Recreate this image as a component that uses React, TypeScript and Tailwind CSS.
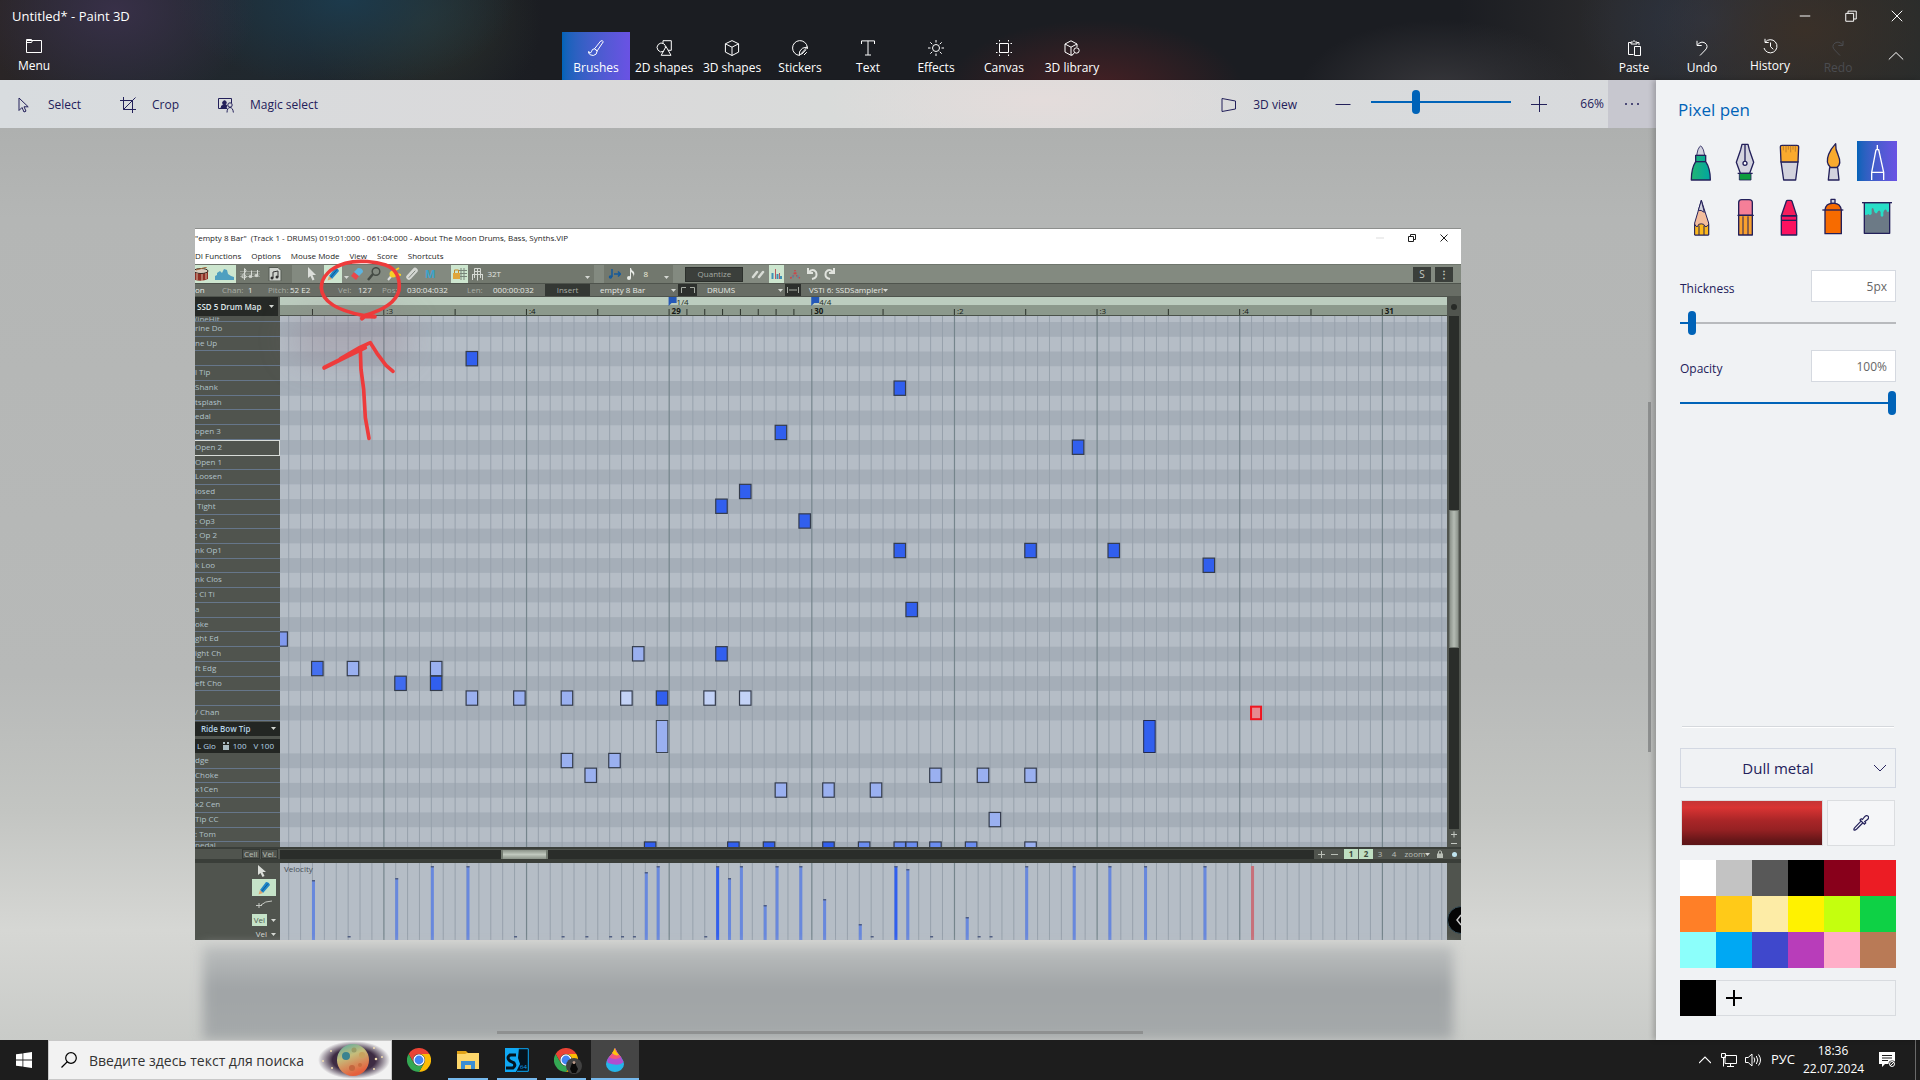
import type { ReactNode } from 'react'

interface IconProps {
  children: ReactNode;
  className?: string;
}

function Icon({ children, className = "w-4 h-4" }: IconProps) {
  return (
    <svg viewBox="0 0 16 16" fill="none" stroke="currentColor" strokeWidth="1" className={`shrink-0 ${className}`} aria-hidden="true">
      {children}
    </svg>
  );
}

const menuIcon = <Icon><path d="M.5 2.5h15v12H.5zM.5 2.5v-1h5l1 1-1 2h-5" /></Icon>
const brushIcon = <Icon><path d="M6.500 8.800 12.800.9q1.600-.7 2.500.8L9.200 10.900zM6.500 8.800q-2.700.2-2.800 2.400 0 2.200-3.200 1.500 1 2.800 4.800 2.800 3.700-.5 3.900-4.600zM.8 11v2" /></Icon>
const shapes2dIcon = <Icon><path d="M7 3V.7h8.300v9.600H12M7.500 11.400A4.400 4.400 0 1 1 7.900 3.800Q9.600 5 9.400 7.500M10 6.500 5.200 15.300h9.800z" /></Icon>
const shapes3dIcon = <Icon><path d="M8 .6 14.600 3.800v8.300L8 15.500 1.400 12.100V3.800zM1.400 3.800 8 7.200l6.600-3.400M8 7.200v8.300" /></Icon>
const stickersIcon = <Icon><path d="M7.500 15.400A7.400 7.400 0 1 1 15.300 7q-5.500.3-7.300 3.800-1 2-.5 4.600L15.300 7v2M9.500 14.500l4.500-4.800M12 15l2.800-2.800" /></Icon>
const textIcon = <Icon><path d="M1.500 4V.9h13V4M8 .9v14M5 15h6" /></Icon>
const effectsIcon = <Icon><circle cx="8" cy="8" r="3.500" /><path d="M8 0v2.500M8 13.500V16M0 8h2.500M13.500 8H16M2.300 2.300l1.900 1.900M11.800 11.800l1.900 1.900M13.700 2.300l-1.900 1.900M4.200 11.800l-1.900 1.900" /></Icon>
const canvasIcon = <Icon><path d="M3.500 3.500h9v9h-9zM3.500 0v1.500M12.500 0v1.500M3.500 14.500V16M12.500 14.500V16M0 3.500h1.500M0 12.500h1.500M14.500 3.500H16M14.500 12.500H16" /></Icon>
const libraryIcon = <Icon><path d="M8.500 14.600 7 15.300 1 12.100V4l6-3.200L13 4v3M1 4l6 3.200L13 4M7 7.200v8" /><circle cx="12.500" cy="10.500" r="2.700" /><path d="M10.600 12.500 7.800 15.700" /></Icon>
const pasteIcon = <Icon><path d="M5 2.500H2.500v12h5M11 2.500h2V5M5 4V2h1.500Q8-.8 9.500 2H11v2zM8.500 6.500h6v9h-6z" /></Icon>
const undoIcon = <Icon><path d="M3 .8v4.700h4.700M3.200 5.200Q7 .5 11 3q4 3.200.3 7L6 15.500" /></Icon>
const historyIcon = <Icon><path d="M3 .8v3.700h3.700M3.100 4.300A6.600 6.600 0 1 1 2 10M8.500 4.500v4.200l2.800 2.600" /></Icon>
const redoIcon = <Icon><path d="M13 .8v4.700H8.300M12.800 5.200Q9 .5 5 3q-4 3.200-.3 7l5.300 5.500" /></Icon>

const tools = [
  { label: "2D shapes", icon: shapes2dIcon },
  { label: "3D shapes", icon: shapes3dIcon },
  { label: "Stickers", icon: stickersIcon },
  { label: "Text", icon: textIcon },
  { label: "Effects", icon: effectsIcon },
  { label: "Canvas", icon: canvasIcon },
  { label: "3D library", icon: libraryIcon },
]

function RibbonButton({ label, icon, className = "pt-2" }: { label: string; icon: ReactNode; className?: string }) {
  return (
    <button className={`flex h-12 w-[68px] flex-col items-center gap-1 text-xs leading-4 whitespace-nowrap ${className}`}>
      {icon}
      {label}
    </button>
  );
}

function Header() {
  return (
    <header className="h-20 bg-[#1b1d22] bg-[radial-gradient(140px_100px_at_6%_10px,#383048,transparent),radial-gradient(170px_90px_at_18%_0,#1c3a4c,transparent),radial-gradient(120px_100px_at_22%_20px,#2c322c,transparent),radial-gradient(150px_70px_at_57%_90px,#472024,transparent),radial-gradient(140px_70px_at_75%_90px,#37373b,transparent),radial-gradient(150px_100px_at_94%_30px,#3a3028,transparent),radial-gradient(130px_90px_at_89%_20px,#2d3443,transparent),linear-gradient(to_right,#2a2526,#23272d_6%,#20282e_14%,#1b1d22_28%,#1b1d22_76%,#2a2a2c_84%,#282c2c)] text-white">
      <div className="flex h-8">
        <h1 className="flex-1 pl-3 pt-1 text-[13px] leading-6">Untitled* - Paint 3D</h1>
        <button aria-label="Minimize" className="grid w-[46px] place-items-center"><Icon className="w-3 h-3"><path d="M1 8h14" strokeWidth="1.300" /></Icon></button>
        <button aria-label="Restore" className="grid w-[46px] place-items-center"><Icon className="w-3 h-3"><path d="M1 4.500h10.500V15H1zM4 4.500V1.500h11V12h-3" strokeWidth="1.300" /></Icon></button>
        <button aria-label="Close" className="grid w-[46px] place-items-center"><Icon className="w-3 h-3"><path d="m1 1 14 14M15 1 1 15" strokeWidth="1.300" /></Icon></button>
      </div>
      <div className="flex">
        <RibbonButton label="Menu" icon={menuIcon} className="pt-1.5" />
        <nav className="flex flex-1 justify-center">
          <RibbonButton label="Brushes" icon={brushIcon} className="bg-linear-to-r from-[#0063b8] to-[#6a52e4] pt-2" />
          {tools.map((tool) => <RibbonButton key={tool.label} {...tool} />)}
        </nav>
        <RibbonButton label="Paste" icon={pasteIcon} />
        <RibbonButton label="Undo" icon={undoIcon} />
        <RibbonButton label="History" icon={historyIcon} className="pt-1.5" />
        <RibbonButton label="Redo" icon={redoIcon} className="pt-2 text-[#4b4c50]" />
        <button aria-label="Collapse ribbon" className="grid w-12 place-items-center"><Icon><path d="m.8 11.500 7.200-7 7.200 7" /></Icon></button>
      </div>
    </header>
  );
}

const sliderClass = "h-6 appearance-none bg-transparent bg-no-repeat bg-center bg-[length:100%_2px] [&::-webkit-slider-thumb]:h-6 [&::-webkit-slider-thumb]:w-2 [&::-webkit-slider-thumb]:appearance-none [&::-webkit-slider-thumb]:rounded-full [&::-webkit-slider-thumb]:bg-[#0063b8]"

function Toolbar() {
  return (
    <div className="flex h-12 items-center bg-[#d9dbdc] bg-[radial-gradient(220px_60px_at_63%_20px,#e4dcdb,transparent),linear-gradient(to_right,#d8dcdf,#dad9da_35%,#d9dbda_50%,#d8dadd)] text-xs text-[#23205a] shadow-[0_2px_3px_#00000022]">
      <button className="flex h-12 w-[102px] items-center gap-4 pl-4 pt-0.5">
        <Icon><path d="M3 1v12.500l3-3 2 4.500 2-.9-2-4.300h4.200z" /></Icon>
        Select
      </button>
      <button className="flex h-12 w-[98px] items-center gap-4 pl-[18px] pt-0.5">
        <Icon><path d="M3.500 0v12.500H16M0 3.500h12.500V16M3.500 12.500 15.500.5" /></Icon>
        Crop
      </button>
      <button className="flex h-12 items-center gap-4 pl-[18px] pt-0.5">
        <Icon><path d="M9 11.500H.500v-10h13V6" /><path d="M3 11q.3-3 2.500-3.300Q4 6 5 4.500q1.700-1.600 3 0 .8 1.500-.7 3.200L9 8.500 8 11z" fill="currentColor" /><circle cx="12" cy="8" r="2.200" /><path d="M9 15.500Q9.200 10.500 12 10.500t3.400 5" /></Icon>
        Magic select
      </button>
      <div className="ml-auto flex items-center">
        <button className="flex h-12 items-center gap-4 pt-0.5">
          <Icon><path d="M1 1.500 14.500 4v8L1 14.500z" /></Icon>
          3D view
        </button>
        <button aria-label="Zoom out" className="ml-[38px]"><Icon><path d="M.5 8.500h15" /></Icon></button>
        <input type="range" aria-label="Zoom" min="0" max="100" defaultValue="31" className={`${sliderClass} mx-5 mb-1 w-[140px] bg-[linear-gradient(#0063b8,#0063b8)]`} />
        <button aria-label="Zoom in"><Icon><path d="M0 8.500h16M8.500 0v16" /></Icon></button>
        <span className="w-[61px] pr-1 text-right">66%</span>
        <button aria-label="More options" className="grid h-12 w-12 place-items-center bg-[#c7c7cf]">
          <svg viewBox="0 0 16 4" className="h-1 w-4" fill="currentColor"><circle cx="2" cy="2" r="1" /><circle cx="8" cy="2" r="1" /><circle cx="14" cy="2" r="1" /></svg>
        </button>
      </div>
    </div>
  );
}

const Caret = () => <svg viewBox="0 0 5 3" className="h-[3px] w-[5px] shrink-0" fill="#d5d8d3" aria-hidden="true"><path d="M0 0h5L2.500 3z" /></svg>

const rowLabels = [
  "rine Do", "ne Up", "", "l Tip", "Shank", "tsplash", "edal", "open 3", "Open 2", "Open 1", "Loosen", "losed", " Tight",
  ": Op3", ": Op 2", "nk Op1", "k Loo", "nk Clos", ": Cl Ti", "a", "oke", "ght Ed", "ight Ch", "ft Edg", "eft Cho", "", "/ Chan",
]
const lowerLabels = ["dge", "Choke", "x1Cen", "x2 Cen", "Tip CC", ": Tom"]

const STEP = 11.887
const ORIGIN = 103.3
const ROW = 14.757
const colX = (col: number) => ORIGIN + col * STEP
const rowY = (row: number) => (row < 28 ? 6 + row * ROW : 437.400 + (row - 28) * ROW)

const DARK = "#315fee"
const MID = "#6b8df0"
const LIGHT = "#9ab0f0"
const PALE = "#c3d2f6"

// [column, row, fill]
const notes: [number, number, string][] = [
  [7, 2, DARK], [43, 4, DARK], [33, 7, DARK], [58, 8, DARK], [30, 11, DARK], [28, 12, DARK], [35, 13, DARK],
  [43, 15, DARK], [54, 15, DARK], [61, 15, DARK], [69, 16, DARK], [44, 19, DARK], [-9, 21, "#8099ee"],
  [21, 22, LIGHT], [28, 22, DARK], [-6, 23, "#4570f0"], [-3, 23, LIGHT], [4, 23, LIGHT], [1, 24, "#3f6bef"], [4, 24, DARK],
  [7, 25, LIGHT], [11, 25, LIGHT], [15, 25, LIGHT], [20, 25, PALE], [23, 25, DARK], [27, 25, PALE], [30, 25, PALE],
  [15, 28, LIGHT], [19, 28, LIGHT], [17, 29, LIGHT], [46, 29, LIGHT], [50, 29, LIGHT], [54, 29, LIGHT],
  [33, 30, LIGHT], [37, 30, LIGHT], [41, 30, LIGHT], [51, 32, LIGHT],
  [22, 34, DARK], [29, 34, DARK], [32, 34, DARK], [37, 34, DARK], [40, 34, MID], [43, 34, MID], [44, 34, MID],
  [46, 34, MID], [49, 34, MID], [54, 34, LIGHT],
]

// [column, height]
const velocities: [number, number][] = [
  [-6, 60], [1, 62], [4, 74], [7, 74], [22, 68], [23, 74], [28, 74], [29, 62], [30, 74], [32, 35], [33, 74], [35, 74],
  [37, 41], [40, 16], [43, 74], [44, 71], [49, 23], [54, 74], [58, 74], [61, 74], [64, 74], [69, 74],
  [-3, 3], [11, 3], [15, 3], [17, 3], [19, 3], [20, 3], [21, 3], [41, 3], [46, 3], [50, 3], [51, 3], [27, 3],
]

const gridLines = Array.from({ length: 99 }, (_, i) => i - 8)

function GridLines({ height }: { height: number }) {
  return (
    <>
      {gridLines.map((i) => (
        <rect key={i} x={colX(i)} width={i % 12 === 0 ? 1.2 : 1} y="0" height={height} fill={i % 12 === 0 ? "#75858c" : "#97a1ac"} />
      ))}
    </>
  );
}

function PianoRoll() {
  const stripes = Array.from({ length: 35 }, (_, i) => i).filter((i) => i % 2 === 0)
  return (
    <svg viewBox="0 0 1167 531" preserveAspectRatio="none" className="block h-full w-full bg-[#b5bdc6]" aria-label="Piano roll">
      {stripes.map((row) => <rect key={row} y={rowY(row)} width="1167" height={ROW} fill="#a5aeb8" />)}
      <GridLines height={531} />
      {notes.map(([col, row, fill]) => (
        <rect key={`${col}-${row}`} x={colX(col) - 0.4} y={rowY(row)} width="11.500" height="14.300" fill={fill} stroke="#343c4c" strokeWidth="1.200" />
      ))}
      <rect x={colX(23) - 0.4} y="404.500" width="11.500" height="32" fill={LIGHT} stroke="#3a4250" />
      <rect x={colX(64) - 0.4} y="404.500" width="11.500" height="32" fill={DARK} stroke="#222a50" />
      <rect x={colX(73)} y={rowY(26) + 1} width="10" height="12.500" fill="#e68a90" stroke="#f01520" strokeWidth="2" />
    </svg>
  );
}

function VelocityLane() {
  return (
    <svg viewBox="0 0 1167 77" preserveAspectRatio="none" className="block h-full w-full bg-[#b5bdc6]" aria-label="Velocity lane">
      <GridLines height={77} />
      {velocities.map(([col, height]) => (
        <g key={col}>
          {height > 3 && <rect x={colX(col)} y={77 - height} width="3" height={height} fill={col === 28 || col === 43 ? DARK : "#6888dd"} />}
          <rect x={colX(col)} y={height > 3 ? 77 - height : 73} width="3" height="1.500" fill="#4d5b80" />
        </g>
      ))}
      <rect x={colX(73)} y="3" width="3" height="74" fill="#c8707a" />
    </svg>
  );
}

const rulerTicks = [-6, 0, 6, 12, 18, 24, 25.5, 27, 28.5, 30, 31.5, 33, 34.5, 36, 42, 48, 54, 60, 66, 72, 78, 84]
const rulerMarks = [
  { col: 0, label: ":3" }, { col: 12, label: ":4" }, { col: 24, label: "29" }, { col: 36, label: "30" },
  { col: 48, label: ":2" }, { col: 60, label: ":3" }, { col: 72, label: ":4" }, { col: 84, label: "31" },
]

function Ruler() {
  return (
    <svg viewBox="0 0 1167 19" preserveAspectRatio="none" className="block h-[19px] min-w-0 flex-1 bg-[#8c998c]" aria-label="Timeline">
      <rect width="1167" height="8" fill="#bccdbf" />
      {rulerTicks.map((t) => <rect key={t} x={colX(t)} y="12" width="1" height="6" fill="#2b322b" />)}
      <rect y="18" width="1167" height="1" fill="#4a524a" />
      {rulerMarks.map((m) => (
        <text key={m.col} x={colX(m.col) + 3} y="17" fontSize="8" fill="#161a16" fontWeight={m.label[0] === ":" ? 400 : 700}>{m.label}</text>
      ))}
      {[{ col: 24, label: "1/4" }, { col: 36, label: "4/4" }].map((f) => (
        <g key={f.col}>
          <path d={`M${colX(f.col)} 0h8v6h-5l-3 3z`} fill="#2458b8" />
          <text x={colX(f.col) + 8} y="8" fontSize="8" fill="#222a22">{f.label}</text>
        </g>
      ))}
    </svg>
  );
}

function EditorToolbar() {
  return (
    <div className="flex h-[19px] items-center overflow-hidden border-t border-[#6f766d] bg-[#838a80]">
      <div className="flex h-full w-[97px] items-center bg-[#72786e]">
        <div className="flex h-full w-[41px] items-center gap-1.5 bg-[#cde6cf]">
          <svg viewBox="0 0 14 14" className="h-[14px] w-[14px]"><path d="M0 4h13v8q-6 3-13 1z" fill="#8e2f26" /><ellipse cx="6" cy="4" rx="7" ry="2.500" fill="#d8cbbd" stroke="#3a2c25" /><path d="M2 6v7M7 7v7M11 6v6" stroke="#d9b9a0" /><path d="m1 3 11-3" stroke="#a46a3d" /></svg>
          <svg viewBox="0 0 20 14" className="h-[14px] w-5"><path d="M0 13V9l2-1V6l3-2 2 2 2-4 3 1 1 4 3 2 3 1v3z" fill="#4f9fc0" /></svg>
        </div>
        <svg viewBox="0 0 20 14" className="ml-1 h-[14px] w-5" stroke="#d5d9d3" fill="none"><path d="M0 4.500h20M0 7h20M0 9.500h20" strokeWidth=".4" /><path d="M4.500 13V1.500q3 1 .5 4-4 3-3 5 3 1.500 4.500-.5-.5-2.500-3-1.500M11.500 9V3.500M17.500 8V3" /><ellipse cx="10.500" cy="9.500" rx="1.500" ry="1.100" fill="#d5d9d3" /><ellipse cx="16.500" cy="8.500" rx="1.500" ry="1.100" fill="#d5d9d3" /></svg>
        <svg viewBox="0 0 14 14" className="ml-2 h-[14px] w-[14px]"><path d="M1 .5h9l3 3V14H1z" fill="#cfd3ce" stroke="#555b53" /><path d="M5 11V5l5-1v6" stroke="#333" fill="none" /><circle cx="4" cy="11" r="1.500" fill="#333" /><circle cx="9" cy="10" r="1.500" fill="#333" /></svg>
      </div>
      <svg viewBox="0 0 8 14" className="ml-4 h-[14px] w-2"><path d="M0 0v11l2.500-2 2 4.500 2-1L4.500 8H8z" fill="#dcdfda" /></svg>
      <span className="ml-2 flex h-full w-[18px] items-center justify-center bg-[#cde6cf]"><Pencil /></span>
      <span className="ml-0.5 mt-1.5"><Caret /></span>
      <svg viewBox="0 0 12 12" className="ml-0.5 h-3 w-3"><path d="m0 8 3-4 5 4-3 4z" fill="#e8474b" /><path d="m3 4 4-4q5 0 5 4L8 8z" fill="#5cb4e0" /></svg>
      <svg viewBox="0 0 14 14" className="ml-1 h-[14px] w-[14px]" fill="none"><circle cx="9" cy="4.500" r="3.800" stroke="#454b44" strokeWidth="1.500" /><path d="m6 7-5 6" stroke="#454b44" strokeWidth="2.500" /></svg>
      <svg viewBox="0 0 14 14" className="ml-1.5 h-[14px] w-[14px]"><path d="m1 13 5-6" stroke="#ddd" strokeWidth="2" /><circle cx="6" cy="7" r="3.500" fill="#f3cf28" /><path d="m7 4 5-3M10 7l4 1" stroke="#f3cf28" strokeWidth="2" /></svg>
      <svg viewBox="0 0 14 14" className="ml-1 h-[14px] w-[14px]" fill="none"><path d="m4 10 6-6.500" stroke="#d5d8d3" strokeWidth="5.500" strokeLinecap="round" /><path d="m4 10.500 6-6.500" stroke="#7c837a" strokeLinecap="round" /></svg>
      <span className="ml-1.5 text-[11px] font-bold text-[#3aa3cc]">M</span>
      <div className="ml-4 flex h-full w-[143px] items-center bg-[#72786e] pr-1">
        <span className="flex h-full w-[17px] items-center justify-center bg-[#cde6cf]"><svg viewBox="0 0 14 12" className="h-3 w-[14px]" fill="none"><path d="M5 2.500h9M5 5.500h9M5 8.500h9M8 0v12M11 0v12" stroke="#79857b" /><path d="M0 5h7v6H0z" fill="#e0a63a" /><path d="M1.500 5V2h4v3" stroke="#c58a27" /></svg></span>
        <svg viewBox="0 0 11 13" className="ml-1 h-[13px] w-[11px]" fill="none" stroke="#d5d9d3"><path d="M2.500 3.500V.5h6v3M2.500 3.500h6M0 6.500h11M2.500 3v7M5.500 .5v12M8.500 3v7M.5 12V6.500M10.500 6.500V12" /></svg>
        <span className="ml-1 text-[8px] text-[#e4e6e2]">32T</span>
        <span className="ml-auto mt-1.5"><Caret /></span>
      </div>
      <div className="ml-2.5 flex h-full w-[69px] items-center bg-[#72786e] px-1">
        <svg viewBox="0 0 13 10" className="h-2.5 w-[13px]" fill="none" stroke="#155a9c" strokeWidth="1.500"><path d="M4 0v8M6 5h6M10 2.500 12.500 5 10 7.500" /><circle cx="2.500" cy="8" r="1" /></svg>
        <svg viewBox="0 0 8 12" className="ml-1.5 h-3 w-2" fill="#e8ebe6"><circle cx="2" cy="10" r="2" /><path d="M3 0h1q0 2 3 4 1 2-.5 5Q7 6 4 4v6H3z" /></svg>
        <span className="ml-2 text-[8px] text-[#f0efdc]">8</span>
        <span className="ml-auto mt-1.5"><Caret /></span>
      </div>
      <button className="ml-3 h-[15px] w-[58px] border border-[#2c302c] bg-[#3b3f3b] text-[8px] leading-3 text-[#a5aaa3]">Quantize</button>
      <svg viewBox="0 0 14 9" className="ml-2 h-[9px] w-[14px]" stroke="#d8dcd5" strokeWidth="2.500" strokeLinecap="round"><path d="m2 7 4-5M8 7l4-5" /></svg>
      <span className="ml-1 flex h-full w-[15px] items-end justify-center bg-[#cde6cf] pb-1"><svg viewBox="0 0 12 10" className="h-2.5 w-3"><path d="M1.500 10V4M6.500 10V5M10 10V7" stroke="#3e8fb5" strokeWidth="2" /><path d="M4.500 10V0M8.500 10V4" stroke="#b8585f" fill="none" /></svg></span>
      <svg viewBox="0 0 11 10" className="ml-1.5 h-2.5 w-[11px]" fill="none"><path d="M0 9q4 0 5-8 1 8 6 8" stroke="#c9484b" strokeWidth="1.500" strokeDasharray="2 1" /><path d="M3 9V6M8 9V6" stroke="#3e8fb5" /></svg>
      <svg viewBox="0 0 11 12" className="ml-1.5 h-3 w-[11px]" fill="none" stroke="#e0e3dd" strokeWidth="2"><path d="M1 0v5h5M2 4q4-4 7 0 2 6-4 7" /></svg>
      <svg viewBox="0 0 11 12" className="ml-1.5 h-3 w-[11px]" fill="none" stroke="#e0e3dd" strokeWidth="2"><path d="M10 0v5H5M9 4Q5 0 2 4q-2 6 4 7" /></svg>
      <button className="ml-auto h-[15px] w-[18px] bg-[#3b3f3b] text-[10px] leading-3 text-[#c5c9c3]">S</button>
      <button className="ml-1 mr-2 h-[15px] w-[18px] bg-[#3b3f3b] text-[10px] leading-3 font-bold text-[#c5c9c3]">⋮</button>
    </div>
  );
}

function Pencil() {
  return (
    <svg viewBox="0 0 14 14" className="h-[14px] w-[14px]"><path d="M3 9 9 1q3 0 4 3L6 12z" fill="#1f86c8" /><path d="m4.500 10.500 6.500-8" stroke="#0c5a97" /><path d="m3 9 3 3-4.500 1.500z" fill="#e0a46c" /></svg>
  );
}

function InfoBar() {
  return (
    <div className="flex h-[14px] items-center overflow-hidden border-y border-[#4f544d] bg-[#686d65] text-[8px] leading-3 font-medium whitespace-nowrap text-[#e6e9e3]">
      <span className="w-[27px]">on</span>
      <span className="w-[26px] text-[#a9aea5]">Chan:</span>
      <span className="w-5">1</span>
      <span className="w-[22px] text-[#a9aea5]">Pitch:</span>
      <span className="w-12">52 E2</span>
      <span className="w-5 text-[#a9aea5]">Vel:</span>
      <span className="w-6">127</span>
      <span className="w-[25px] text-[#a9aea5]">Pos:</span>
      <span className="w-[60px]">030:04:032</span>
      <span className="w-[26px] text-[#a9aea5]">Len:</span>
      <span className="w-[52px]">000:00:032</span>
      <span className="h-full w-[45px] bg-[#343834] text-center text-[#a9aea5]">Insert</span>
      <span className="ml-2.5 w-[71px]">empty 8 Bar</span>
      <Caret />
      <span className="ml-0.5 flex h-full w-[19px] items-center justify-center bg-[#2d302d]"><svg viewBox="0 0 14 6" className="h-1.5 w-[14px]" fill="none" stroke="#a7aca4"><path d="M.5 6V.5H5M9 .5h4.500V6" /></svg></span>
      <span className="ml-2.5 w-[71px]">DRUMS</span>
      <Caret />
      <span className="ml-0.5 flex h-full w-4 items-center justify-center bg-[#2d302d]"><svg viewBox="0 0 12 6" className="h-1.5 w-3" fill="none" stroke="#a7aca4"><path d="M.5 0v6M11.500 0v6M2 3h8" /></svg></span>
      <span className="ml-2">VSTi 6: SSDSampler!</span>
      <Caret />
    </div>
  );
}

function RowLabel({ text, selected = false }: { text: string; selected?: boolean }) {
  return (
    <li className={`min-h-0 flex-1 overflow-hidden border-b text-[8px] leading-3 font-medium whitespace-pre text-[#b0c2c9] ${selected ? "border border-l-0 border-[#d8dcd8]" : "border-[#66768a]"}`}>
      {text}
    </li>
  );
}

function DrumList() {
  return (
    <ul className="flex h-[531px] w-[85px] shrink-0 flex-col bg-[#50544e]">
      <li className="h-1.5 shrink-0 overflow-hidden border-b border-[#66768a] text-[8px] leading-[6px] text-[#a9bbc2]">(ineHit</li>
      {rowLabels.map((text, i) => <RowLabel key={i} text={text} selected={i === 8} />)}
      <li className="flex h-[33px] shrink-0 flex-col justify-between py-px text-[8px] leading-[14px] text-[#b5d3e6]">
        <div className="flex h-[14px] items-center justify-between bg-[#232623] pl-1.5 pr-1 font-semibold">Ride Bow Tip <Caret /></div>
        <div className="flex h-[14px] items-center justify-between bg-[#232623] pl-0.5 pr-1.5">
          <span>L Glo</span>
          <span className="flex items-center gap-1"><svg viewBox="0 0 6 8" className="h-2 w-1.5" fill="#a9bbc2"><path d="M0 0h2v2H0zM4 0h2v2H4zM0 3h6v5H0z" /></svg>100</span>
          <span>V 100</span>
        </div>
      </li>
      {lowerLabels.map((text) => <RowLabel key={text} text={text} />)}
      <li className="h-[5px] shrink-0 overflow-hidden text-[8px] leading-[6px] text-[#a9bbc2]">pedal</li>
    </ul>
  );
}

// Hand-drawn circle and arrow over the pencil tool
function Scribble() {
  return (
    <svg viewBox="15 9 660 660" className="pointer-events-none absolute left-0 top-0 h-[220px] w-[220px]" fill="none" stroke="#ee3b3b" strokeWidth="11" strokeLinecap="round" strokeLinejoin="round" aria-hidden="true">
      <path d="M466 112c-45 14-72 40-72 74 2 38 45 67 128 83 42-12 95-35 105-76 4-38-10-66-40-76-28-9-80-17-121-5" />
      <path d="m516 277 8-7 30 2" strokeWidth="13" />
      <path d="m403 425 72-36 50-24" strokeWidth="13" />
      <path d="m452 398 58-34 31-14 20 32 27 36 21 18M511 370l2 60 8 60 5 85 11 62" />
    </svg>
  );
}

function EditorWindow() {
  return (
    <section className="relative w-full overflow-hidden border-t border-[#8d8f8d] text-[#1d1d1d]">
      <div className="flex h-[18px] items-center bg-white text-[8px] leading-[18px] whitespace-pre">
        <h2 className="flex-1">"empty 8 Bar"  (Track 1 - DRUMS) 019:01:000 - 061:04:000 - About The Moon Drums, Bass, Synths.VIP</h2>
        <div className="flex items-center gap-6 pr-[13px]">
          <Icon className="h-2 w-2 text-[#ddd]"><path d="M0 8h16" strokeWidth="2" /></Icon>
          <Icon className="h-2 w-2"><path d="M1 5h10v10H1zM5 5V1h10v10h-4" strokeWidth="2" /></Icon>
          <Icon className="h-2 w-2"><path d="m1 1 14 14M15 1 1 15" strokeWidth="2" /></Icon>
        </div>
      </div>
      <div className="flex h-[17px] items-center gap-2.5 bg-white pt-px text-[8px] leading-4 whitespace-nowrap">
        <span>DI Functions</span><span>Options</span><span>Mouse Mode</span><span>View</span><span>Score</span><span>Shortcuts</span>
      </div>
      <EditorToolbar />
      <InfoBar />
      <div className="flex h-[19px]">
        <div className="flex w-[85px] shrink-0 items-center justify-between border-r-2 border-[#50544e] bg-[#262926] pl-0.5 pr-1 text-[8px] font-semibold text-[#dfe6e6]">SSD 5 Drum Map <Caret /></div>
        <Ruler />
        <div className="grid w-[14px] shrink-0 place-items-center bg-[#50544e]"><span className="h-1.5 w-1.5 rounded-full bg-[#272a27]" /></div>
      </div>
      <div className="flex h-[531px]">
        <DrumList />
        <div className="min-w-0 flex-1"><PianoRoll /></div>
        <div className="flex w-[14px] shrink-0 flex-col items-center bg-[#50544e] text-[#c5c9c3]">
          <div className="flex w-2.5 flex-1 flex-col bg-[#2a2d2a] pt-[194px]"><div className="h-[138px] border border-[#70766f] bg-linear-to-r from-[#8d948c] via-[#b5bcb4] to-[#8d948c]" /></div>
          <svg viewBox="0 0 8 18" className="h-[18px] w-2" stroke="currentColor"><path d="M1 5.500h6M4 2.500v6M1 14.500h6" /></svg>
        </div>
      </div>
      <div className="flex h-4 items-center border-t-2 border-b-4 border-[#3a3e39] bg-[#50544e] text-[8px] leading-[10px] text-[#b9beb6]">
        <div className="flex w-[85px] shrink-0 justify-end gap-px pr-0.5"><span className="border border-[#343834] px-px leading-2">Cell</span><span className="border border-[#343834] px-px leading-2">Vel.</span></div>
        <div className="flex h-[9px] min-w-0 flex-1 bg-[#2a2d2a] pl-[221px]"><div className="w-[47px] border-x-2 border-[#747c72] bg-linear-to-b from-[#8b9389] via-[#c0c8be] to-[#8b9389]" /></div>
        <svg viewBox="0 0 26 8" className="mx-0.5 h-2 w-[26px]" stroke="currentColor"><path d="M2 4.500h7M5.500 1v7M15 4.500h7" /></svg>
        <span className="w-[14px] bg-[#bfdfc2] text-center font-bold text-[#3b4a3c]">1</span>
        <span className="ml-px w-[14px] bg-[#bfdfc2] text-center font-bold text-[#3b4a3c]">2</span>
        <span className="w-[14px] text-center">3</span>
        <span className="w-[14px] text-center">4</span>
        <span className="flex w-[33px] items-center justify-center">zoom<Caret /></span>
        <svg viewBox="0 0 8 8" className="ml-0.5 h-2 w-2" fill="#b9beb6"><path d="M1 3.500h6V8H1z" /><path d="M2.500 4V1.500q1.500-1.500 3 0V4" fill="none" stroke="#b9beb6" /></svg>
        <span className="ml-2 mr-1 h-[5px] w-[5px] rounded-full bg-[#c0e4f0]" />
      </div>
      <div className="flex h-[77px]">
        <div className="flex w-[85px] shrink-0 flex-col items-end bg-[#50544e] pr-1 text-[8px] leading-3 text-[#d5d8d3]">
          <svg viewBox="0 0 8 12" className="mr-2.5 mt-0.5 h-3 w-2"><path d="M0 0v10l2.500-2 2 4 2-1-2-4H8z" fill="#dcdfda" /></svg>
          <span className="mt-0.5 flex h-[17px] w-6 items-center justify-center bg-[#c5e3c8]"><Pencil /></span>
          <svg viewBox="0 0 16 8" className="mr-1 mt-1 h-2 w-4" fill="none" stroke="#c5c9c3"><path d="M0 5.500h6M3 3v5M5 5q4-4 11-4" /></svg>
          <span className="mt-1.5 flex items-center gap-1"><b className="bg-[#c5e3c8] px-0.5 font-normal text-[#4d584e]">Vel</b><Caret /></span>
          <span className="mt-0.5 flex items-center gap-1">Vel <Caret /></span>
        </div>
        <div className="relative min-w-0 flex-1">
          <VelocityLane />
          <span className="absolute left-1 top-0 text-[8px] leading-3 text-[#474e55]">Velocity</span>
        </div>
        <div className="relative w-[14px] shrink-0 bg-[#50544e]">
          <svg viewBox="0 0 14 30" className="absolute left-0 top-[42px] h-[30px] w-[14px]"><circle cx="14" cy="15" r="13.500" fill="#050505" stroke="#39515c" /><path d="m14 10-4 5 4 5" fill="none" stroke="#c8c8c8" strokeWidth="1.500" /></svg>
        </div>
      </div>
      <div className="pointer-events-none absolute left-[95px] top-[84px] h-[50px] w-[120px] rounded-full bg-[#8b708044] blur-lg" />
      <Scribble />
    </section>
  );
}

const ink = "#23205a"

const brushes = [
  {
    name: "Marker",
    art: <><path d="M47 43q3-20 9-26 3-4 6 0 6 6 9 26z" fill="#d3d3de" strokeWidth="2.500" /><path d="M44 43h30v19q14 20 14 55H31q0-35 13-55z" fill="url(#teal)" /><path d="M44 62h30" /></>,
  },
  {
    name: "Calligraphy pen",
    art: <><path d="M43 97h35v20H43z" fill="#0c9c3c" strokeWidth="2.500" /><path d="M51 10h18l4 16 13 38-12 33H46L34 64l13-38z" fill="#d3d3de" /><path d="M60 10v50M38 97h45" /><circle cx="60" cy="67" r="6" fill="#fff" /></>,
  },
  {
    name: "Oil brush",
    art: <><path d="m36 62 8 55h36l7-55z" fill="#d3d3de" /><path d="M34 17q0-4 5-4h45q5 0 5 4l-2 46H36z" fill="#f9aa2e" /><path d="M43 14v14M51 14v20M58 14v12M65 14v20M72 14v12M79 14v18" strokeWidth="2" stroke="#a5692b" /></>,
  },
  {
    name: "Watercolor",
    art: <><path d="m50 80-4 37h32l-4-37z" fill="#d3d3de" /><path d="M68 8q-1 18 7 33 12 27-3 38H52Q37 66 47 40 53 24 68 8z" fill="#f9aa2e" /></>,
  },
  {
    name: "Pixel pen",
    selected: true,
    art: <g stroke="#fff"><path d="M61 12v14M57 26h8l15 68v23M57 26 44 94v23M44 94h36" fill="none" /></g>,
  },
  {
    name: "Pencil",
    art: <><path d="m61 10-20 68v36h42V78z" fill="#f3bd9c" strokeWidth="3" /><path d="m61 10-9 30q8-2 18 6z" fill="#d3d3de" strokeWidth="3" /><path d="M41 114V82q8 14 12 0 8-3 15 0 6 14 15 0v32z" fill="#fcb81c" strokeWidth="3" /><path d="M54 86v28M69 86v28" strokeWidth="3" /></>,
  },
  {
    name: "Eraser",
    art: <><path d="M41 55V17q0-9 9-9h22q10 0 10 9v38z" fill="#f57f98" /><path d="M41 55h41v59H41z" fill="#f9a02e" /><path d="M37 55h50M54 58v56M69 58v56" strokeWidth="3" /></>,
  },
  {
    name: "Crayon",
    art: <><path d="m37 56 15-43q1-3 4-3h9q3 0 4 3l14 43z" fill="#f51d5c" /><path d="M37 57h46v57H37z" fill="#fb1260" /><path d="M37 70h46" /></>,
  },
  {
    name: "Spray can",
    art: <><path d="M54 7h12v12H54z" fill="#d3d3de" /><path d="M36 39q2-20 22-20h6q18 0 21 20v71H36z" fill="#f76b00" /><path d="M28 39h63" /></>,
  },
  {
    name: "Fill",
    art: <><path d="M22 17h76v92H22z" fill="#6c7a86" /><path d="M24 19h72v24q-3 4-7 0v-3q-4-5-7 0l-3 6v10q-4 6-8 0V46q-3-9-8-3-3 8-7 6-5-3-6-12-3-8-6-1v15q-7 6-9 0l-4 2-7 1z" fill="#27dfc8" stroke="none" /><path d="M15 17h90" /></>,
  },
]

const swatches = [
  "bg-[#ffffff]", "bg-[#c3c3c3]", "bg-[#585858]", "bg-[#000000]", "bg-[#88001b]", "bg-[#ec1c24]",
  "bg-[#ff7f27]", "bg-[#ffca18]", "bg-[#fdeca6]", "bg-[#fff200]", "bg-[#c4ff0e]", "bg-[#0ed145]",
  "bg-[#8cfffb]", "bg-[#00a8f3]", "bg-[#3f48cc]", "bg-[#b83dba]", "bg-[#ffaec8]", "bg-[#b97a56]",
]

function SidePanel() {
  return (
    <aside className="z-10 flex w-[264px] shrink-0 flex-col bg-[#f0f2f4] px-6 pb-6 text-[#23205a] shadow-[-3px_0_5px_#00000033]">
      <h2 className="-ml-0.5 pt-4 text-[17px] leading-7 text-[#0063b8]">Pixel pen</h2>
      <div className="mt-[17px] grid grid-cols-5 gap-x-1 gap-y-4">
        {brushes.map((brush) => (
          <button key={brush.name} aria-label={brush.name} className={`ml-px h-10 w-10 ${brush.selected ? "bg-linear-to-r from-[#0063b8] to-[#6a52e4]" : ""}`}>
            <svg viewBox="0 0 120 120" className="h-10 w-10" fill="none" stroke={ink} strokeWidth="4" strokeLinejoin="round">
              <defs><linearGradient id="teal"><stop stopColor="#22b573" /><stop offset="1" stopColor="#00a6a0" /></linearGradient></defs>
              {brush.art}
            </svg>
          </button>
        ))}
      </div>
      <div className="mt-[33px] flex items-center justify-between text-xs">
        <label htmlFor="thickness" className="pt-1.5">Thickness</label>
        <input id="thickness" defaultValue="5px" className="h-8 w-[85px] border border-[#d5d9e0] bg-white px-2 text-right text-[#666]" />
      </div>
      <input type="range" aria-label="Thickness slider" min="1" max="100" defaultValue="5" className={`${sliderClass} mt-[9px] w-full bg-[linear-gradient(to_right,#0063b8_5%,#b8babd_5%)]`} />
      <div className="mt-[15px] flex items-center justify-between text-xs">
        <label htmlFor="opacity" className="pt-1.5">Opacity</label>
        <input id="opacity" defaultValue="100%" className="h-8 w-[85px] border border-[#d5d9e0] bg-white px-2 text-right text-[#666]" />
      </div>
      <input type="range" aria-label="Opacity slider" min="0" max="100" defaultValue="100" className={`${sliderClass} mt-[9px] w-full bg-[linear-gradient(#0063b8,#0063b8)]`} />
      <div className="mx-0.5 mt-auto border-b border-white"><div className="border-b border-[#d5d8dc]" /></div>
      <div className="relative mt-5">
        <select aria-label="Material" className="h-10 w-full appearance-none border border-[#d3d8e2] bg-transparent pr-5 text-[15px] [text-align-last:center]">
          <option>Dull metal</option>
        </select>
        <Icon className="pointer-events-none absolute right-2.5 top-3.5 h-3 w-3"><path d="m0 4 8 8 8-8" strokeWidth="1.300" /></Icon>
      </div>
      <div className="mx-px mt-3 flex h-[46px] gap-1">
        <button aria-label="Current color" className="h-full flex-1 border border-[#dcdee0] bg-[linear-gradient(#c43636,#d93433_15%,#a82527_45%,#962123_65%,#651618_90%,#5c1517)]" />
        <button aria-label="Eyedropper" className="grid w-[68px] place-items-center border border-[#dbdde0] bg-[#f5f6f8]">
          <Icon><path d="m9.500 4.500 2-2.500q2-2.300 3.500-.8t-.8 3.500L11.700 6.700l1 1.300-1.300 1.200L7 5l1.200-1.300zM8 6.200 2 12.300Q.5 14 1 15q1 .5 2.700-1l6-6" strokeWidth="1.200" /></Icon>
        </button>
      </div>
      <div className="mt-3.5 grid grid-cols-6">
        {swatches.map((color) => <button key={color} aria-label="Swatch" className={`h-9 ${color}`} />)}
      </div>
      <div className="mt-3 flex h-9 border border-[#d8dbdf]">
        <button aria-label="Black" className="-my-px -ml-px w-9 bg-black" />
        <button aria-label="Add color" className="grid w-9 place-items-center text-black"><Icon><path d="M0 8h16M8 0v16" strokeWidth="2" /></Icon></button>
      </div>
    </aside>
  );
}

function Chrome() {
  return (
    <svg viewBox="0 0 24 24" className="h-6 w-6" aria-hidden="true">
      <path d="M1.600 6A12 12 0 0 1 22.400 6H12a6 6 0 0 0-5.200 9z" fill="#ea4335" />
      <path d="M22.400 6A12 12 0 0 1 12 24l5.200-9A6 6 0 0 0 12 6z" fill="#fbbc05" />
      <path d="M12 24A12 12 0 0 1 1.600 6l5.200 9a6 6 0 0 0 10.400 0z" fill="#34a853" />
      <circle cx="12" cy="12" r="5.700" fill="#fff" /><circle cx="12" cy="12" r="4.400" fill="#4285f4" />
    </svg>
  );
}

function TaskButton({ label, children, active = false, open = true }: { label: string; children: ReactNode; active?: boolean; open?: boolean }) {
  return (
    <button aria-label={label} className={`relative mr-px grid h-10 w-12 place-items-center ${active ? "bg-[#454545]" : ""}`}>
      {children}
      {open && <span className={`absolute bottom-0 h-0.5 bg-[#76b9ed] ${active ? "inset-x-0" : "inset-x-1"}`} />}
    </button>
  );
}

function Taskbar() {
  return (
    <footer className="flex h-10 items-center bg-[#1d1d1d] text-white">
      <button aria-label="Start" className="grid h-10 w-12 place-items-center">
        <svg viewBox="0 0 16 16" className="h-4 w-4" fill="#fff"><path d="m0 2.300 6.500-.9v6.200H0zM7.300 1.300 16 0v7.600H7.300zM0 8.400h6.500v6.200L0 13.700zM7.300 8.400H16V16l-8.700-1.300z" /></svg>
      </button>
      <div className="flex h-10 w-[344px] items-center border border-[#c8c8c8] bg-[#f2f2f2] pl-3 text-[#333]">
        <Icon className="h-4 w-4 text-black"><circle cx="10" cy="6" r="5.300" strokeWidth="1.200" /><path d="M6.300 9.800.5 15.500" strokeWidth="1.200" /></Icon>
        <input aria-label="Search" placeholder="Введите здесь текст для поиска" className="ml-3 min-w-0 flex-1 bg-transparent pt-0.5 text-sm placeholder:text-[#333]" />
        <svg viewBox="0 0 74 38" className="h-[38px] w-[74px] shrink-0" aria-hidden="true">
          <defs>
            <radialGradient id="sky"><stop offset=".6" stopColor="#3d2b42" /><stop offset="1" stopColor="#3d2b42" stopOpacity="0" /></radialGradient>
            <linearGradient id="planet" x1="0" y1="0" x2=".4" y2="1"><stop stopColor="#4fa8a5" /><stop offset=".45" stopColor="#c5bd7b" /><stop offset="1" stopColor="#e65f3c" /></linearGradient>
          </defs>
          <ellipse cx="37" cy="19" rx="36" ry="19" fill="url(#sky)" />
          <circle cx="36" cy="19" r="16" fill="url(#planet)" />
          <circle cx="29" cy="15" r="4" fill="#3b8390" /><circle cx="37" cy="9" r="2.500" fill="#9a9c66" /><circle cx="45" cy="14" r="3" fill="#c9a25e" /><circle cx="35" cy="27" r="3" fill="#c4673f" /><circle cx="43" cy="24" r="2" fill="#c96d3f" />
          <g fill="#f5dfb0"><circle cx="14" cy="10" r="1" /><circle cx="6" cy="20" r="1" /><circle cx="15" cy="27" r="1" /><circle cx="57" cy="7" r="1" /><circle cx="59" cy="18" r="1.300" /><circle cx="57" cy="28" r="1" /><circle cx="65" cy="16" r="1" /></g>
        </svg>
      </div>
      <div className="ml-[3px] flex">
        <TaskButton label="Chrome" open={false}><Chrome /></TaskButton>
        <TaskButton label="Explorer">
          <svg viewBox="0 0 22 18" className="h-[18px] w-[22px]"><path d="M0 0h9l2 2v4H0z" fill="#e0a217" /><path d="M0 3h8l2-1h12v16H0z" fill="#fcd66b" /><path d="M4 18v-8h14v8h-4v-4H8v4z" fill="#3a8ed4" /></svg>
        </TaskButton>
        <TaskButton label="Samplitude">
          <svg viewBox="0 0 24 24" className="h-6 w-6"><path d="M0 0h24v24H0z" fill="#10a9f5" /><path d="M14 0h10v24H11l4-8-2-6z" fill="#04141f" /><path d="M14 .7h9.300v22.600H12" fill="none" stroke="#10a9f5" /><path d="M11 7H5q-4 3 0 6l4 2q2 3-1 5H1" fill="none" stroke="#04141f" strokeWidth="3" /><text x="15" y="21" fontSize="6" fill="#10a9f5">64</text></svg>
        </TaskButton>
        <TaskButton label="Chrome profile">
          <span className="relative"><Chrome /><svg viewBox="0 0 16 16" className="absolute -bottom-0.5 -right-1 h-4 w-4"><circle cx="8" cy="8" r="8" fill="#414141" /><path d="M6 5q2-3 4 0v2l2 4-2 4H6l-2-4z" fill="#0a0a0a" /><circle cx="8" cy="4.500" r="1.500" fill="#b99a8a" /></svg></span>
        </TaskButton>
        <TaskButton label="Paint 3D" active>
          <svg viewBox="0 0 18 24" className="h-6 w-[18px]"><path d="M9 0q2 5 6 9 6 8 0 13-6 4-12 0-6-5 0-13 5-5 6-9z" fill="#26b5ea" /><path d="M9 0q2 5 6 9l2.500 5Q13 19 2 15q-2-3 1-6 5-5 6-9z" fill="#b04fd0" /><path d="M9 0q2 5 6 9-6 4-12 0 5-5 6-9z" fill="#f2577b" /><path d="M8.300 0q1.500 4 4.700 7-4 1.500-7-2 2-2 2.300-5z" fill="#fdc60b" /></svg>
        </TaskButton>
      </div>
      <div className="ml-auto flex items-center text-xs">
        <Icon className="h-3 w-3"><path d="m0 12 8-8 8 8" strokeWidth="1.500" /></Icon>
        <Icon className="ml-2.5 h-4 w-4"><path d="M4 3.500h11.500v8H4zM9.500 11.500v3M6 14.500h7M.5 1.500h4v4h-4zM2.500 5.500v9" /></Icon>
        <Icon className="ml-2 h-4 w-4"><path d="M.5 5.500h2.700L7 2v12L3.200 10.500H.5zM9 5.500q1.500 2.500 0 5M11.300 4q3 4 0 8M13.500 2.500q4 5.500 0 11" /></Icon>
        <span className="ml-2.5 text-[13px]">РУС</span>
        <span className="ml-2 w-[60px] text-center leading-[18px]">18:36<br />22.07.2024</span>
        <svg viewBox="0 0 16 16" className="ml-4 h-4 w-4"><path d="M0 0h16v12H6l-3 3v-3H0z" fill="#fff" /><path d="M3 3.500h10M3 6h10M3 8.500h6" stroke="#1d1d1d" /><circle cx="13" cy="12" r="3.500" fill="#1d1d1d" /><circle cx="13" cy="12" r="2.500" fill="none" stroke="#fff" /><path d="m11 14 4-4" stroke="#fff" /></svg>
        <span className="ml-5 h-10 w-[5px] border-l border-[#6a6a6a]" />
      </div>
    </footer>
  );
}

export default function App() {
  return (
    <div className="flex min-h-screen flex-col font-['Open_Sans','Noto_Sans',sans-serif]">
      <Header />
      <div className="flex flex-1">
        <div className="flex min-w-0 flex-1 flex-col">
          <Toolbar />
          <main className="relative flex flex-1 items-center overflow-hidden bg-[linear-gradient(#aeb0af,#b4b6b5_10%,#b7b9b8_60%,#c3c5c2_75%,#d6d7d4_88%,#c9cbc8)] px-[195px]">
            <EditorWindow />
            <div className="absolute inset-x-[203px] bottom-0 h-[94px] bg-[linear-gradient(#bcbfbf,#a0a4a6_45%,#a5a9aa)] blur-[6px]" />
            <div className="absolute right-[5px] top-[30%] h-[350px] w-[3px] bg-[#8e9090]" />
            <div className="absolute bottom-1.5 left-[30%] h-[3px] w-[39%] bg-[#8e9090]" />
          </main>
        </div>
        <SidePanel />
      </div>
      <Taskbar />
    </div>
  );
}
